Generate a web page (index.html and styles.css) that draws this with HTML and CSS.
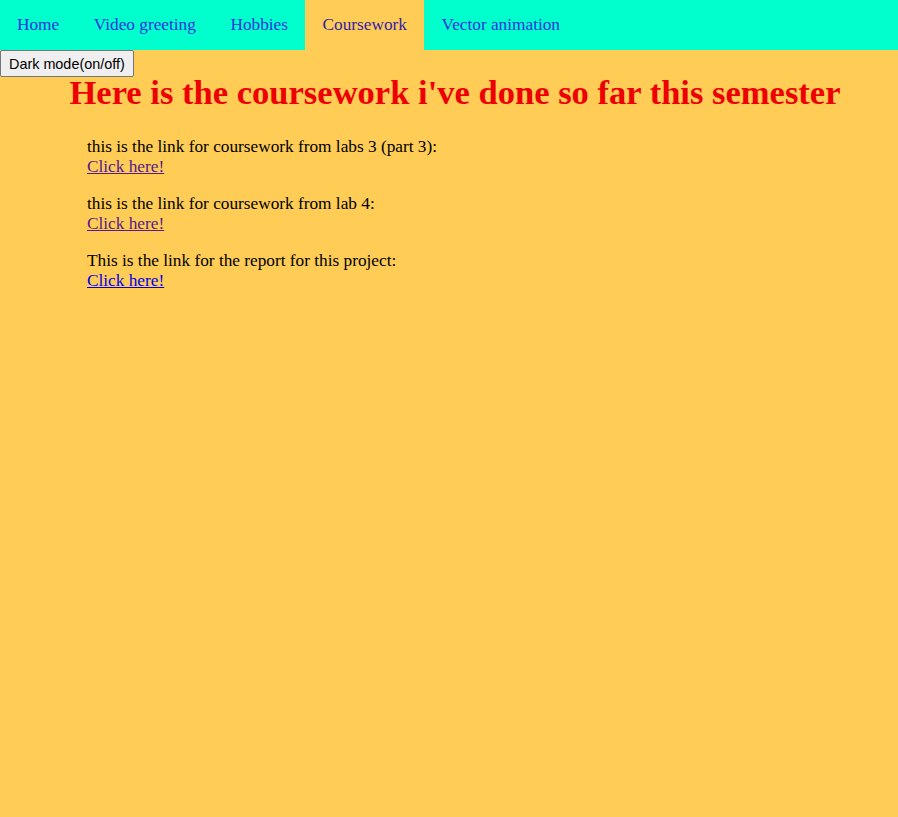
FILE: index.html
```html
<!DOCTYPE html>
<html>
<head>
<meta charset="utf-8">
<link rel="stylesheet" href="styles.css">
</head>
<body>
<nav class="topnav">
  <a href="#" class="nav-link">Home</a>
  <a href="#" class="nav-link">Video greeting</a>
  <a href="#" class="nav-link">Hobbies</a>
  <a href="#" class="nav-link active">Coursework</a>
  <a href="#" class="nav-link">Vector animation</a>
</nav>
<button class="mode-btn">Dark mode(on/off)</button>
<h1 class="title">Here is the coursework i've done so far this semester</h1>
<div class="content">
  <p class="item">this is the link for coursework from labs 3 (part 3):<br><a href="#" class="link visited">Click here!</a></p>
  <p class="item">this is the link for coursework from lab 4:<br><a href="#" class="link visited">Click here!</a></p>
  <p class="item">This is the link for the report for this project:<br><a href="#" class="link">Click here!</a></p>
</div>
</body>
</html>
```
FILE: styles.css
```css
html, body {
  margin: 0;
  padding: 0;
  background: #ffcc55;
  font-family: "Liberation Serif", "Times New Roman", serif;
  font-size: 17.28px;
  height: 100%;
}
.topnav {
  display: flex;
  background: #00ffcc;
  height: 50px;
}
.nav-link {
  display: flex;
  align-items: center;
  padding: 0 17.3px 1px;
  color: #2233dd;
  text-decoration: none;
  font-size: 17.28px;
}
.nav-link:first-child {
  padding-left: 17px;
}
.nav-link.active {
  background: #ffcc55;
  color: #3322aa;
}
.mode-btn {
  display: block;
  font-family: Arial, "Liberation Sans", sans-serif;
  font-size: 14.4px;
  padding: 5px 8px 4px;
  margin: 0;
  background: #efefef;
  border: 1px solid #767676;
  border-radius: 2px;
  color: #000;
}
.title {
  color: #ee0000;
  text-align: center;
  font-size: 34.56px;
  margin: -4px 0 25px;
  padding-left: 12px;
}
.content {
  padding-left: 87px;
}
.item {
  margin: 0 0 17px;
  line-height: 20px;
}
.link {
  color: #0000ee;
}
.link.visited {
  color: #551a8b;
}
```
